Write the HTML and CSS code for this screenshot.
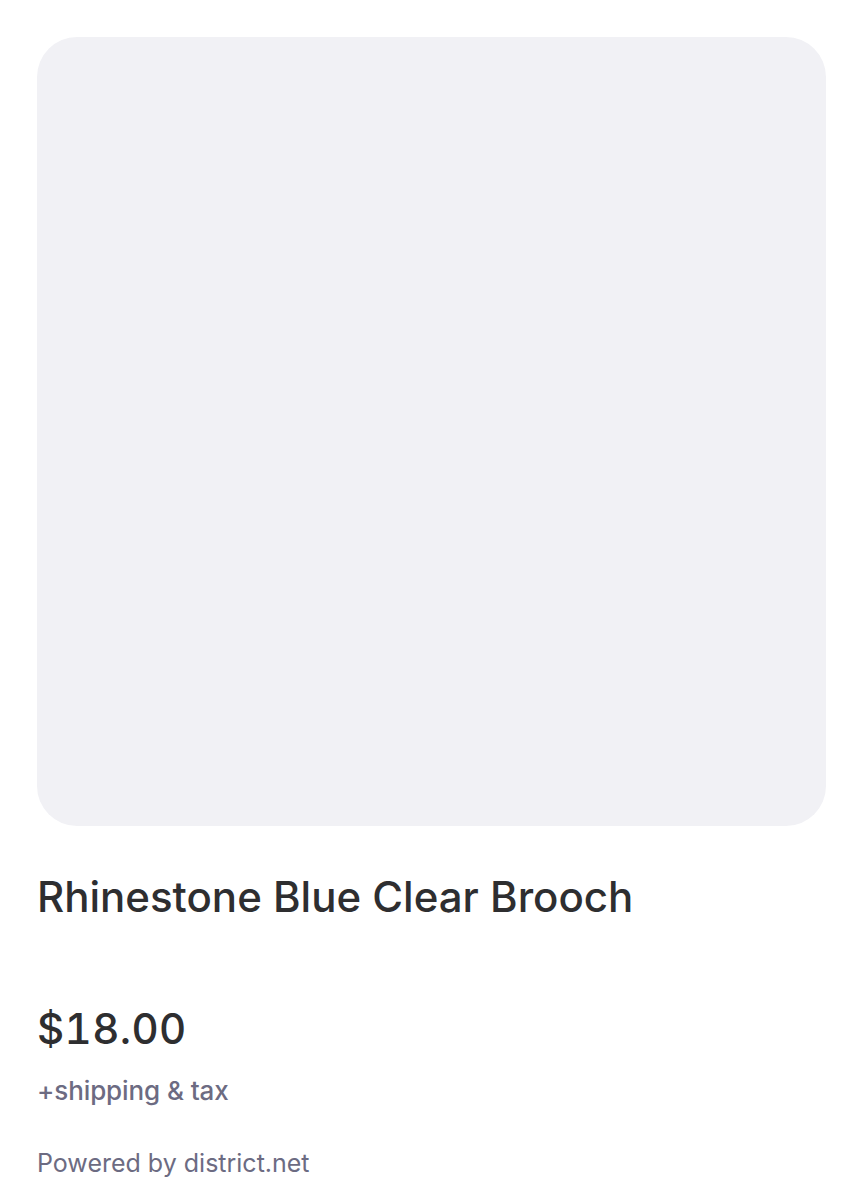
FILE: index.html
```html
<!DOCTYPE html>
<html>
    <head>
        <title>Rhinestone Blue Clear Brooch</title>
        <link rel="stylesheet" href="styles.css">
    </head>
    <body>
        <div class="product">
            <div class="product-img"></div>

            <p class="product-title">Rhinestone Blue Clear Brooch</p>

            <p class="product-price">$18.00</p>
            <p class="product-note">+shipping &amp; tax</p>

            <p class="powered">Powered by district.net</p>
        </div>
    </body>
</html>
```

FILE: styles.css
```css
body{
    margin: 0;
    background-color: white;
    font-family: Inter, "Noto Sans", sans-serif;
}
p{
    margin: 0;
}
.product{
    padding: 37px 37px 0 37px;
}
.product-img{
    aspect-ratio: 1;
    background-color: #f1f1f5;
    border-radius: 40px;
}
.product-title{
    margin-top: 46px;
    font-size: 42px;
    line-height: 50px;
    font-weight: 500;
    color: #2e2e30;
}
.product-price{
    margin-top: 82px;
    font-size: 42px;
    line-height: 50px;
    font-weight: 500;
    font-variant-numeric: tabular-nums;
    letter-spacing: 0.4px;
    color: #2e2e30;
}
.product-note{
    margin-top: 21px;
    font-size: 26px;
    line-height: 32px;
    font-weight: 500;
    letter-spacing: -0.1px;
    color: #6c6b82;
}
.powered{
    margin-top: 40px;
    font-size: 25px;
    line-height: 32px;
    color: #6c6b82;
}
```
